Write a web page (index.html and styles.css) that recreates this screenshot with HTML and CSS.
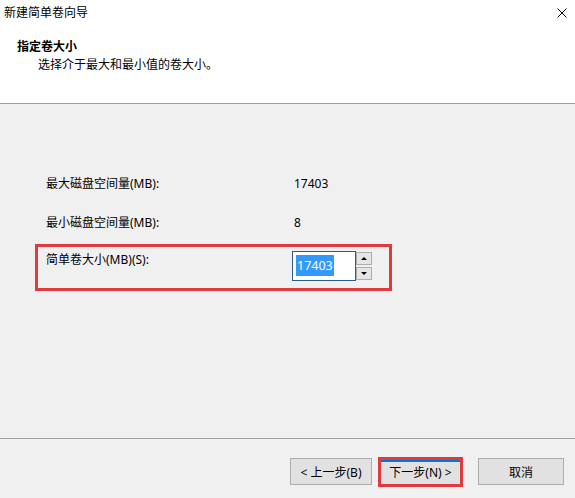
FILE: index.html
```html
<!DOCTYPE html>
<html lang="zh-CN">
<head>
    <meta charset="UTF-8">
    <meta name="viewport" content="width=device-width, initial-scale=1.0">
    <title>新建简单卷向导</title>
    <link rel="stylesheet" href="styles.css">
</head>
<body>
    <div class="wizard">
        <div class="titlebar">
            <span class="title">新建简单卷向导</span>
            <svg class="close" viewBox="0 0 10 10">
                <path d="M0.5 0.5L9.5 9.5M9.5 0.5L0.5 9.5"/>
            </svg>
        </div>

        <div class="header">
            <h1>指定卷大小</h1>
            <p class="subtitle">选择介于最大和最小值的卷大小。</p>
        </div>

        <div class="content">
            <div class="row">
                <span class="label">最大磁盘空间量(MB):</span>
                <span class="value">17403</span>
            </div>
            <div class="row">
                <span class="label">最小磁盘空间量(MB):</span>
                <span class="value">8</span>
            </div>

            <div class="highlight-box">
                <span class="label size-label">简单卷大小(MB)(S):</span>
                <div class="spin">
                    <div class="spin-input"><span class="selected">17403</span></div>
                    <div class="spin-buttons">
                        <div class="spin-btn"><span class="tri up"></span></div>
                        <div class="spin-btn"><span class="tri down"></span></div>
                    </div>
                </div>
            </div>
        </div>

        <div class="footer">
            <button class="btn back">&lt; 上一步(B)</button>
            <button class="btn next">下一步(N) &gt;</button>
            <button class="btn cancel">取消</button>
        </div>
    </div>
</body>
</html>
```

FILE: styles.css
```css
* {
    margin: 0;
    padding: 0;
    box-sizing: border-box;
    font-family: "Noto Sans", "Noto Sans CJK SC", sans-serif;
}

body {
    background: #f0f0f0;
    color: #000;
    font-size: 12px;
}

.wizard {
    width: 575px;
    height: 498px;
    display: flex;
    flex-direction: column;
}

.titlebar {
    height: 30px;
    background: #fff;
    display: flex;
    justify-content: space-between;
    padding: 0 8px 0 4px;
}

.titlebar .title {
    line-height: 26px;
    font-size: 12px;
    color: #000;
}

.titlebar .close {
    width: 10px;
    height: 10px;
    margin-top: 8px;
    stroke: #000;
    stroke-width: 1;
    fill: none;
}

.header {
    height: 74px;
    background: #fff;
    border-bottom: 1px solid #a0a0a0;
    padding: 8px 0 0 17px;
}

.header h1 {
    font-size: 12px;
    font-weight: 700;
    line-height: 18px;
}

.header .subtitle {
    line-height: 18px;
    padding-left: 21px;
}

.content {
    height: 334px;
    padding: 70px 0 0 46px;
}

.row {
    display: flex;
    line-height: 20px;
    margin-bottom: 19px;
}

.label {
    width: 248px;
}

.highlight-box {
    margin: -8px 0 0 -11px;
    width: 357px;
    height: 47px;
    border: 3px solid #e0393e;
    padding-left: 8px;
    display: flex;
    align-items: flex-start;
}

.size-label {
    width: 246px;
    line-height: 20px;
    margin-top: 3px;
}

.spin {
    display: flex;
    align-items: flex-start;
    margin-top: 4px;
}

.spin-input {
    width: 64px;
    height: 30px;
    background: #fff;
    border: 1px solid #2a5d8a;
    padding: 3px 0 0 3px;
}

.selected {
    display: inline-block;
    background: #3399ff;
    color: #fff;
    line-height: 21px;
    font-size: 12.5px;
    padding: 0 1px;
}

.spin-buttons {
    display: flex;
    flex-direction: column;
    margin-top: 1px;
    gap: 2px;
}

.spin-btn {
    width: 16px;
    height: 13px;
    background: #e5e5e5;
    border: 1px solid #adadad;
    display: flex;
    align-items: center;
    justify-content: center;
}

.tri {
    width: 0;
    height: 0;
    border-left: 3px solid transparent;
    border-right: 3px solid transparent;
}

.tri.up {
    border-bottom: 3px solid #000;
}

.tri.down {
    border-top: 3px solid #000;
}

.footer {
    flex: 1;
    border-top: 1px solid #a0a0a0;
    display: flex;
    justify-content: flex-end;
    align-items: flex-start;
    padding: 19px 11px 0 0;
}

.btn {
    height: 27px;
    background: #e1e1e1;
    border: 1px solid #adadad;
    font-size: 12px;
    color: #000;
}

.back {
    width: 82px;
}

.next {
    width: 85px;
    height: 30px;
    margin: -1px 0 0 6px;
    border: 3px solid #e0393e;
    box-shadow: inset 0 2px 0 #0078d7;
}

.cancel {
    width: 86px;
    margin-left: 15px;
}
```
